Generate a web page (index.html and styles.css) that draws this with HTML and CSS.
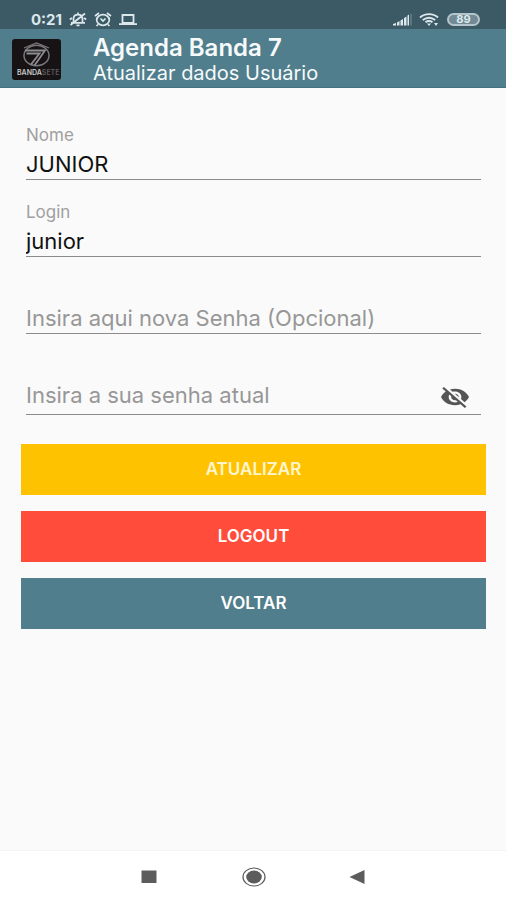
FILE: index.html
```html
<!DOCTYPE html>
<html lang="pt-BR">
<head>
<meta charset="utf-8">
<meta name="viewport" content="width=device-width, initial-scale=1">
<title>Agenda Banda 7</title>
<link rel="stylesheet" href="styles.css">
</head>
<body>
<div class="status">
  <div class="status-group">
    <span class="clock">0:21</span>
    <svg width="18" height="15" viewBox="0 0 18 15" fill="none" stroke="currentColor" stroke-width="1.7" aria-hidden="true"><path d="M4.500 10V7c0-3 2-4.300 4.500-4.300S13.500 4 13.500 7v3M2 10.800h14M7.500 13.300h3M9 .5v2M1.500 13 16 1.500M3 6 .8 7.500M15 6l2.200 1.500"/></svg>
    <svg width="18" height="15" viewBox="0 0 18 15" fill="none" stroke="currentColor" stroke-width="1.700" aria-hidden="true"><ellipse cx="9" cy="8" rx="6.300" ry="5.300"/><path d="M1 4 5 1M17 4l-4-3M6.500 6.500 9 9l2.500-2.500M4 12.500l-1.500 1.500M14 12.500l1.500 1.500"/></svg>
    <svg width="18" height="15" viewBox="0 0 18 15" fill="none" stroke="currentColor" stroke-width="1.800" aria-hidden="true"><path d="M3.500 11V3h11v8zM0 12.200h18"/></svg>
  </div>
  <div class="status-group">
    <svg width="19" height="12" viewBox="0 0 19 12" fill="currentColor" aria-hidden="true"><path d="M0 11.500V10l3-1v2.500zM4 11.500V8.500L6.500 7v4.500zM7.500 11.500V6.500L10 5v6.500zM11 11.500V4l2.500-1.500v9zM14.500 11.500v-10l1.500-1v11z"/><path d="M17.500 0h1v11.500h-1z" opacity=".4"/></svg>
    <svg width="21" height="14" viewBox="0 0 21 14" fill="none" stroke="currentColor" aria-hidden="true"><path d="M1 4.500c5-4.500 13-4.500 18 0M3.800 7c4-3 8.400-3 12.400 0M6.500 9.300c2.200-1.600 4.800-1.600 7 0" stroke-width="1.900"/><path d="M8 10.500h4L10 13zM15 10h4l-2 3z" fill="currentColor" stroke="none"/></svg>
    <span class="battery">89</span>
  </div>
</div>
<header class="bar">
  <svg class="logo" viewBox="0 0 49 41" role="img" aria-label="Banda Sete">
    <rect width="49" height="41" rx="3" fill="#171315"/>
    <ellipse cx="24.500" cy="16.500" rx="12.500" ry="10.300" fill="none" stroke="#77777a" stroke-width="1.500"/>
    <path d="M13 11.500h20L22.500 26.500M14.500 14.500h13L19 25.500" fill="none" stroke="#8d8d90" stroke-width="1.800"/>
    <path d="M12 9 18 6.500l6.500-2.500L31 6.500 37 9" fill="none" stroke="#77777a" stroke-width="1.200"/>
    <text x="5" y="36" class="logo-name">BANDA<tspan class="logo-dim">SETE</tspan></text>
  </svg>
  <div class="titles">
    <h1>Agenda Banda 7</h1>
    <p>Atualizar dados Usuário</p>
  </div>
</header>
<main>
  <form>
    <div class="field">
      <label for="nome">Nome</label>
      <input id="nome" type="text" value="JUNIOR">
    </div>
    <div class="field">
      <label for="login">Login</label>
      <input id="login" type="text" value="junior">
    </div>
    <div class="field floating">
      <input type="password" aria-label="Nova senha" placeholder="Insira aqui nova Senha (Opcional)">
    </div>
    <div class="field floating with-toggle">
      <input type="password" aria-label="Senha atual" placeholder="Insira a sua senha atual">
      <button class="toggle" type="button" aria-label="Mostrar senha">
        <svg width="28" height="23" viewBox="1 2 22 21" preserveAspectRatio="none" fill="currentColor" aria-hidden="true"><path d="M12 7c2.760 0 5 2.240 5 5 0 .65-.13 1.260-.36 1.830l2.920 2.920c1.510-1.260 2.700-2.890 3.430-4.750-1.730-4.390-6-7.500-11-7.500-1.400 0-2.740.25-3.980.7l2.160 2.160C10.740 7.130 11.350 7 12 7zM2 4.270l2.280 2.280.46.46C3.080 8.300 1.780 10.020 1 12c1.730 4.390 6 7.500 11 7.500 1.550 0 3.030-.3 4.380-.84l.42.42L19.730 22 21 20.730 3.270 3 2 4.270zM7.530 9.800l1.550 1.550c-.05.21-.08.43-.08.65 0 1.660 1.340 3 3 3 .22 0 .44-.03.65-.08l1.550 1.550c-.67.33-1.410.53-2.200.53-2.760 0-5-2.240-5-5 0-.79.2-1.530.53-2.200zm4.310-.78l3.150 3.150.02-.16c0-1.660-1.340-3-3-3l-.17.01z"/></svg>
      </button>
    </div>
    <div class="actions">
      <button class="action update" type="submit">ATUALIZAR</button>
      <button class="action logout" type="button">LOGOUT</button>
      <button class="action back" type="button">VOLTAR</button>
    </div>
  </form>
</main>
<nav class="system" aria-label="Sistema">
  <button type="button" aria-label="Recentes"><svg width="24" height="20" viewBox="0 0 24 20" aria-hidden="true"><path d="M3.500 3.500h15v12.500h-15z" fill="currentColor"/></svg></button>
  <button type="button" aria-label="Início"><svg width="24" height="20" viewBox="0 0 24 20" aria-hidden="true"><ellipse cx="12" cy="10" rx="11" ry="9" fill="none" stroke="currentColor" stroke-width="1.200"/><ellipse cx="12" cy="10" rx="7.800" ry="6.500" fill="currentColor"/></svg></button>
  <button type="button" aria-label="Voltar"><svg width="24" height="20" viewBox="0 0 24 20" aria-hidden="true"><path d="M3.500 10 18.500 3v14z" fill="currentColor"/></svg></button>
</nav>
</body>
</html>
```
FILE: styles.css
```css
* { box-sizing: border-box; }

body {
  display: flex;
  flex-direction: column;
  min-height: 100vh;
  margin: 0;
  background: #fafafa;
  color: #111;
  font-family: Inter, Roboto, sans-serif;
}

button {
  padding: 0;
  border: 0;
  background: none;
  color: inherit;
  font-family: inherit;
}

svg { display: block; }

.status {
  display: flex;
  justify-content: space-between;
  height: 29px;
  padding: 10px 26px 0 31px;
  background: #3c5a66;
  color: #dce8ec;
}

.status-group {
  display: flex;
  align-items: center;
  gap: 7px;
}

.clock {
  font-size: 15px;
  font-weight: 700;
  line-height: 19px;
}

.battery {
  width: 33px;
  border: 2px solid #b4c6cc;
  border-radius: 7px;
  background: #718a93;
  font-size: 11px;
  font-weight: 700;
  line-height: 9px;
  text-align: center;
}

.bar {
  display: flex;
  align-items: center;
  gap: 32px;
  height: 59px;
  padding: 2px 12px 0;
  background: #507e8c;
  border-bottom: 1px solid #42717f;
  color: #f7fafb;
}

.titles { padding-top: 3px; }

.logo {
  width: 49px;
  height: 41px;
}

.logo-name {
  fill: #c9c9ca;
  font-size: 7px;
  font-weight: 600;
}

.logo-dim { fill: #5d5a5c; }

h1 {
  margin: 0;
  font-size: 24px;
  font-weight: 600;
  line-height: 26px;
}

.bar p {
  margin: 0;
  font-size: 20px;
  line-height: 25px;
}

main {
  flex: 1;
  padding: 37px 20px 24px 21px;
}

.field {
  position: relative;
  margin: 0 5px 22px;
}

.field label {
  display: block;
  color: #a0a0a0;
  font-size: 17px;
  line-height: 20px;
}

.field input {
  display: block;
  width: 100%;
  height: 35px;
  padding: 3px 0 0;
  border: 0;
  border-bottom: 1px solid #8c8c8c;
  border-radius: 0;
  outline: 0;
  background: none;
  color: #111;
  font-family: inherit;
  font-size: 22px;
}

.field input::placeholder {
  color: #979797;
  opacity: 1;
}

.floating { padding-top: 20px; }

.with-toggle input {
  height: 39px;
  padding: 0 48px 1px 0;
}

.toggle {
  position: absolute;
  right: 12px;
  bottom: 6px;
  color: #555;
}

.actions {
  display: grid;
  gap: 16px;
  margin-top: 29px;
}

.action {
  height: 51px;
  padding-bottom: 2px;
  color: #fff;
  font-size: 17px;
  font-weight: 600;
}

.update { background: #ffc200; color: #fff6d0; }
.logout { background: #ff4c3b; }
.back { background: #507e8c; }

.system {
  display: flex;
  justify-content: center;
  align-items: center;
  gap: 80px;
  height: 50px;
  padding: 2px 0 0 2px;
  border-top: 1px solid #f3f3f3;
  background: #fff;
  color: #5c5c5c;
}
```
